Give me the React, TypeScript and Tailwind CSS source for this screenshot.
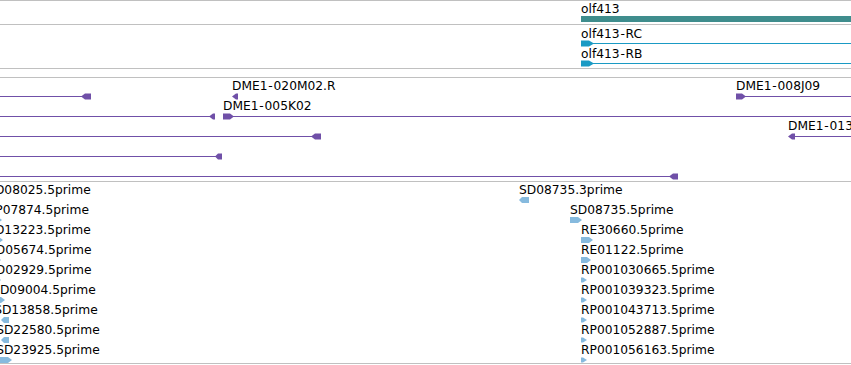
import React from "react";

const TEAL = "#3f8d8d";
const CYAN = "#1a9ac4";
const PURPLE = "#7050a8";
const LIGHT = "#86bade";

const arrowL = (tip: number, end: number, cy: number, h = 6, head = 4) =>
  `${tip},${cy} ${tip + head},${cy - h / 2} ${end},${cy - h / 2} ${end},${cy + h / 2} ${tip + head},${cy + h / 2}`;
const arrowR = (start: number, tip: number, cy: number, h = 6, head = 4) =>
  `${start},${cy - h / 2} ${tip - head},${cy - h / 2} ${tip},${cy} ${tip - head},${cy + h / 2} ${start},${cy + h / 2}`;

function Label({ x, y, text, anchor = "start" }: { x: number; y: number; text: string; anchor?: "start" | "end" }) {
  const parts = text.split("-");
  return (
    <text x={x} y={y} textAnchor={anchor} fill="#000">
      {parts.map((p, i) =>
        i === 0 ? (
          <React.Fragment key={i}>{p}</React.Fragment>
        ) : (
          <React.Fragment key={i}>
            <tspan dx={0.8}>-</tspan>
            <tspan dx={0.8}>{p}</tspan>
          </React.Fragment>
        )
      )}
    </text>
  );
}

function HLine({ x1, x2, y, color }: { x1: number; x2: number; y: number; color: string }) {
  return <rect x={x1} y={y} width={x2 - x1} height={1} fill={color} />;
}

const svgCls = "absolute inset-0 block font-['DejaVu_Sans',sans-serif] text-[12.25px]";

const leftEsts = [
  { name: "SD08025.5prime", end: 90.7 },
  { name: "LP07874.5prime", end: 89 },
  { name: "SD13223.5prime", end: 90.7 },
  { name: "SD05674.5prime", end: 91.5 },
  { name: "SD02929.5prime", end: 91.5 },
  { name: "SD09004.5prime", end: 95.7 },
  { name: "SD13858.5prime", end: 97.7 },
  { name: "SD22580.5prime", end: 99.7 },
  { name: "SD23925.5prime", end: 99.7 },
];

const rightEsts = [
  { name: "SD08735.3prime", x: 519 },
  { name: "SD08735.5prime", x: 570 },
  { name: "RE30660.5prime", x: 581 },
  { name: "RE01122.5prime", x: 581 },
  { name: "RP001030665.5prime", x: 581 },
  { name: "RP001039323.5prime", x: 581 },
  { name: "RP001043713.5prime", x: 581 },
  { name: "RP001052887.5prime", x: 581 },
  { name: "RP001056163.5prime", x: 581 },
];

export default function App() {
  return (
    <div className="w-[851px] h-[365px] bg-white overflow-hidden flex flex-col">
      {/* Gene track */}
      <div className="relative h-[24px] shrink-0 border-t border-[#c0c0c0]">
        <svg className={svgCls} width={851} height={23} viewBox="0 1 851 23">
          <Label x={581} y={13} text="olf413" />
          <rect x={581} y={16} width={270} height={6} fill={TEAL} />
        </svg>
      </div>

      {/* Transcript track */}
      <div className="relative h-[45px] shrink-0 border-t border-b border-[#c0c0c0]">
        <svg className={svgCls} width={851} height={43} viewBox="0 25 851 43">
          <Label x={581} y={38} text="olf413-RC" />
          <HLine x1={585} x2={851} y={43} color={CYAN} />
          <polygon points={arrowR(581, 594, 43.5, 6, 5)} fill={CYAN} />
          <Label x={581} y={58} text="olf413-RB" />
          <HLine x1={585} x2={851} y={63} color={CYAN} />
          <polygon points={arrowR(581, 594, 63.5, 6, 5)} fill={CYAN} />
        </svg>
      </div>

      {/* Clone track */}
      <div className="relative h-[104px] shrink-0 mt-[8px] border-t border-[#c0c0c0]">
        <svg className={svgCls} width={851} height={103} viewBox="0 78 851 103">
          {/* row 1 */}
          <HLine x1={0} x2={84} y={96} color={PURPLE} />
          <polygon points={arrowL(81, 91, 96.5, 6, 4)} fill={PURPLE} />
          <Label x={232} y={90} text="DME1-020M02.R" />
          <polygon points={arrowL(232, 238, 96.5, 6, 4)} fill={PURPLE} />
          <Label x={736} y={90} text="DME1-008J09" />
          <polygon points={arrowR(736, 746, 96.5, 6, 4)} fill={PURPLE} />
          <HLine x1={744} x2={851} y={96} color={PURPLE} />
          {/* row 2 */}
          <HLine x1={0} x2={212} y={116} color={PURPLE} />
          <polygon points={arrowL(209, 215, 116.5, 6, 4)} fill={PURPLE} />
          <Label x={223} y={110} text="DME1-005K02" />
          <polygon points={arrowR(223, 234, 116.5, 6, 4)} fill={PURPLE} />
          <HLine x1={232} x2={851} y={116} color={PURPLE} />
          {/* row 3 */}
          <HLine x1={0} x2={314} y={136} color={PURPLE} />
          <polygon points={arrowL(311, 321, 136.5, 6, 4)} fill={PURPLE} />
          <Label x={788} y={130} text="DME1-013I06" />
          <polygon points={arrowL(788, 795, 136.5, 6, 4)} fill={PURPLE} />
          <HLine x1={790} x2={851} y={136} color={PURPLE} />
          {/* row 4 */}
          <HLine x1={0} x2={218} y={156} color={PURPLE} />
          <polygon points={arrowL(215, 222, 156.5, 6, 3)} fill={PURPLE} />
          {/* row 5 */}
          <HLine x1={0} x2={672} y={176} color={PURPLE} />
          <polygon points={arrowL(669, 678, 176.5, 6, 4)} fill={PURPLE} />
        </svg>
      </div>

      {/* EST track */}
      <div className="relative h-[183px] shrink-0 border-t border-b border-[#c0c0c0]">
        <svg className={svgCls} width={851} height={181} viewBox="0 182 851 181">
          {leftEsts.map((e, i) => (
            <Label key={e.name} x={e.end} y={194 + 20 * i} text={e.name} anchor="end" />
          ))}
          {rightEsts.map((e, i) => (
            <Label key={e.name} x={e.x} y={194 + 20 * i} text={e.name} />
          ))}
          {/* left glyphs */}
          <polygon points={arrowR(-6, 2, 220, 6, 4)} fill={LIGHT} />
          <polygon points={arrowR(-6, 3, 240, 6, 4)} fill={LIGHT} />
          <polygon points={arrowR(-6, 1, 260, 6, 4)} fill={LIGHT} />
          <polygon points={arrowR(-6, 1, 280, 6, 4)} fill={LIGHT} />
          <polygon points={arrowR(-6, 5, 300, 6, 4)} fill={LIGHT} />
          <polygon points={arrowL(1, 9, 320, 6, 3)} fill={LIGHT} />
          <polygon points={arrowL(1, 9, 340, 6, 3)} fill={LIGHT} />
          <polygon points={arrowR(-6, 12, 360, 6, 4)} fill={LIGHT} />
          {/* right glyphs */}
          <polygon points={arrowL(519, 529, 200, 6, 3)} fill={LIGHT} />
          <polygon points={arrowR(570, 582, 220, 6, 4)} fill={LIGHT} />
          <polygon points={arrowR(581, 593, 240, 6, 4)} fill={LIGHT} />
          <polygon points={arrowR(581, 591, 260, 6, 4)} fill={LIGHT} />
          {[280, 300, 320, 340, 360].map((cy) => (
            <polygon key={cy} points={arrowR(581, 587, cy, 5, 4)} fill={LIGHT} />
          ))}
        </svg>
      </div>
    </div>
  );
}
